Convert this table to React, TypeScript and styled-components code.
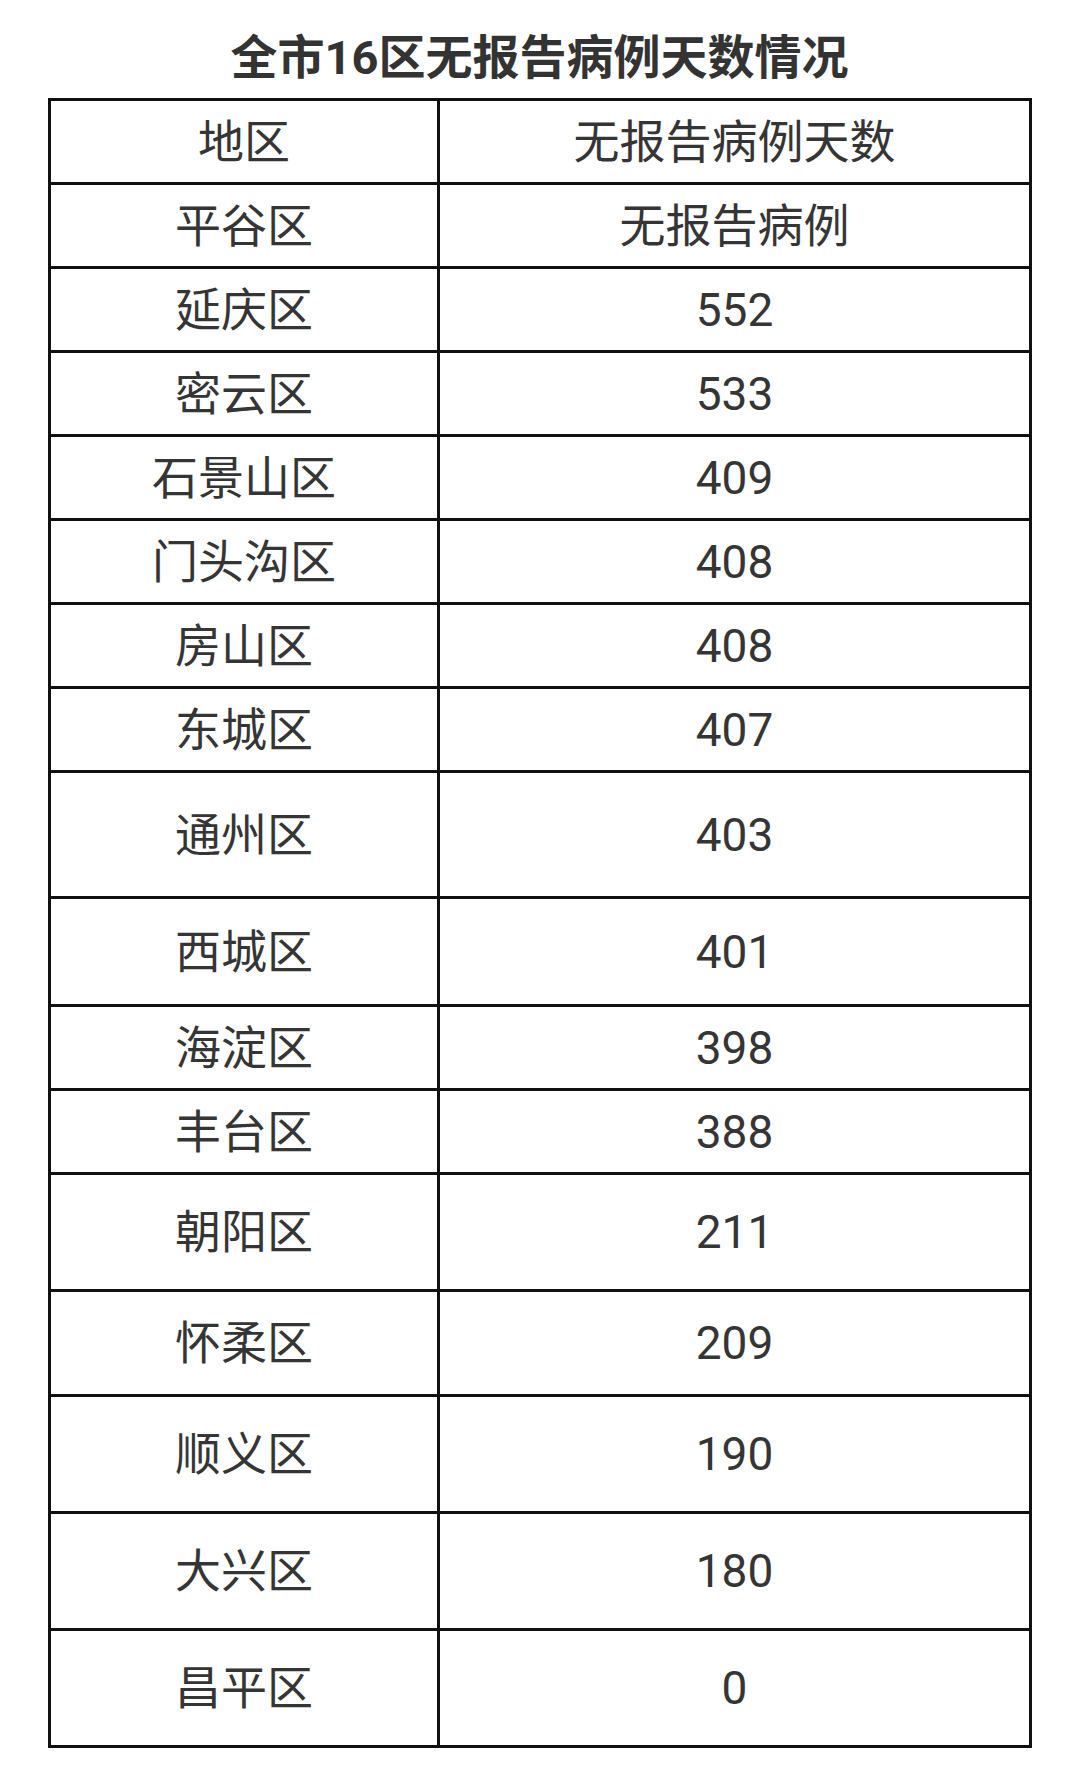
import React from "react";
import styled, { createGlobalStyle } from "styled-components";

const GlobalStyle = createGlobalStyle`
  html, body {
    margin: 0;
    padding: 0;
    background: #ffffff;
  }
  body {
    font-family: Roboto, "Noto Sans CJK SC", "Noto Sans", sans-serif;
  }
`;

const Page = styled.div`
  width: 1079px;
  min-height: 1772px;
  background: #ffffff;
  padding-top: 30px;
  box-sizing: border-box;
`;

const Title = styled.h1`
  margin: 0 0 12px 0;
  height: 56px;
  line-height: 56px;
  text-align: center;
  font-size: 47px;
  font-weight: 700;
  color: #333333;
  font-family: Roboto, "Noto Sans CJK SC", sans-serif;
`;

const Table = styled.div`
  width: 984px;
  margin-left: 48px;
  box-sizing: border-box;
  border-top: 3px solid #111111;
  border-left: 3px solid #111111;
`;

const Row = styled.div<{ $h: number }>`
  display: grid;
  grid-template-columns: 389px 592px;
  height: ${(p) => p.$h}px;
`;

const Cell = styled.div`
  display: flex;
  align-items: center;
  justify-content: center;
  box-sizing: border-box;
  border-right: 3px solid #111111;
  border-bottom: 3px solid #111111;
  font-size: 46px;
  line-height: 1;
  color: #353535;
  font-family: Roboto, "Noto Sans CJK SC", sans-serif;
`;

type Item = { name: string; days: string; pitch: number };

const rows: Item[] = [
  { name: "平谷区", days: "无报告病例", pitch: 84 },
  { name: "延庆区", days: "552", pitch: 84 },
  { name: "密云区", days: "533", pitch: 84 },
  { name: "石景山区", days: "409", pitch: 84 },
  { name: "门头沟区", days: "408", pitch: 84 },
  { name: "房山区", days: "408", pitch: 84 },
  { name: "东城区", days: "407", pitch: 84 },
  { name: "通州区", days: "403", pitch: 126 },
  { name: "西城区", days: "401", pitch: 108 },
  { name: "海淀区", days: "398", pitch: 84 },
  { name: "丰台区", days: "388", pitch: 84 },
  { name: "朝阳区", days: "211", pitch: 117 },
  { name: "怀柔区", days: "209", pitch: 105 },
  { name: "顺义区", days: "190", pitch: 117 },
  { name: "大兴区", days: "180", pitch: 117 },
  { name: "昌平区", days: "0", pitch: 117 },
];

export default function App() {
  return (
    <Page>
      <GlobalStyle />
      <Title>全市16区无报告病例天数情况</Title>
      <Table>
        <Row $h={84}>
          <Cell>地区</Cell>
          <Cell>无报告病例天数</Cell>
        </Row>
        {rows.map((r) => (
          <Row key={r.name} $h={r.pitch}>
            <Cell>{r.name}</Cell>
            <Cell>{r.days}</Cell>
          </Row>
        ))}
      </Table>
    </Page>
  );
}
